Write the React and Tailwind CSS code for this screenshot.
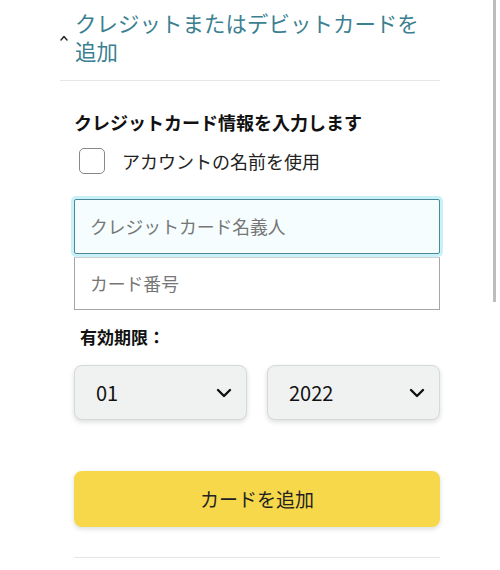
import React from "react";

const font = { fontFamily: '"Noto Sans CJK JP", "Noto Sans", sans-serif' };

function Chevron() {
  return (
    <svg width="16" height="10" viewBox="0 0 16 10" fill="none">
      <path d="M2 2 L8 8 L14 2" stroke="#111" strokeWidth="2.4" strokeLinecap="round" strokeLinejoin="round" />
    </svg>
  );
}

function Select({ value }) {
  return (
    <div className="flex-1 h-[55px] rounded-[8px] border border-[#d5d9d9] bg-[#f0f2f2] shadow-[0_2px_5px_rgba(15,17,17,0.15)] flex items-center justify-between pl-[21px] pr-[14px]">
      <span className="text-[20px] text-[#111]">{value}</span>
      <Chevron />
    </div>
  );
}

export default function App() {
  return (
    <div className="relative w-[500px] h-[570px] bg-white overflow-hidden" style={font}>
      <div className="absolute right-[4px] top-0 w-[3px] h-[302px] bg-[#bdbdbd]" />
      <div className="ml-[60px] w-[380px] flex flex-col">
        <div className="flex items-start pt-[9px] pb-[15px] border-b border-[#e7e7e7]">
          <span className="w-[15px] mt-[26px] flex">
            <svg width="8" height="6" viewBox="0 0 8 6" fill="none">
              <path d="M1 5 L4 1.5 L7 5" stroke="#222" strokeWidth="1.4" strokeLinecap="round" strokeLinejoin="round" />
            </svg>
          </span>
          <span className="text-[21.4px] leading-[28px] text-[#3b7f91] tracking-[0.1px]">
            クレジットまたはデビットカードを
            <br />
            追加
          </span>
        </div>
        <div className="pl-[14px] flex flex-col">
          <div className="mt-[28px] text-[18px] font-bold text-[#111] leading-[26px]">クレジットカード情報を入力します</div>
          <div className="mt-[13px] flex items-center pl-[5px]">
            <div className="w-[26px] h-[26px] rounded-[5px] border border-[#888] bg-white" />
            <span className="ml-[17px] text-[18px] text-[#222] leading-[26px]">アカウントの名前を使用</span>
          </div>
          <div className="mt-[25px] h-[55px] border border-[#4d8899] bg-[#f5fdfe] rounded-[2px] shadow-[0_0_0_3px_#c9f2f8] flex items-center pl-[15px]">
            <span className="text-[17.8px] text-[#767676]">クレジットカード名義人</span>
          </div>
          <div className="mt-[3px] h-[53px] border border-[#a6a6a6] border-t-[#d0d0d0] bg-white flex items-center pl-[15px]">
            <span className="text-[17.8px] text-[#767676]">カード番号</span>
          </div>
          <div className="mt-[15px] pl-[6px] text-[17px] font-bold text-[#111] leading-[24px]">有効期限：</div>
          <div className="mt-[16px] flex gap-[20px]">
            <Select value="01" />
            <Select value="2022" />
          </div>
          <div className="mt-[51px] h-[56px] rounded-[8px] bg-[#f7d84b] shadow-[0_2px_5px_rgba(15,17,17,0.15)] flex items-center justify-center">
            <span className="text-[19px] text-[#222]">カードを追加</span>
          </div>
          <div className="mt-[30px] border-b border-[#e7e7e7]" />
        </div>
      </div>
    </div>
  );
}
